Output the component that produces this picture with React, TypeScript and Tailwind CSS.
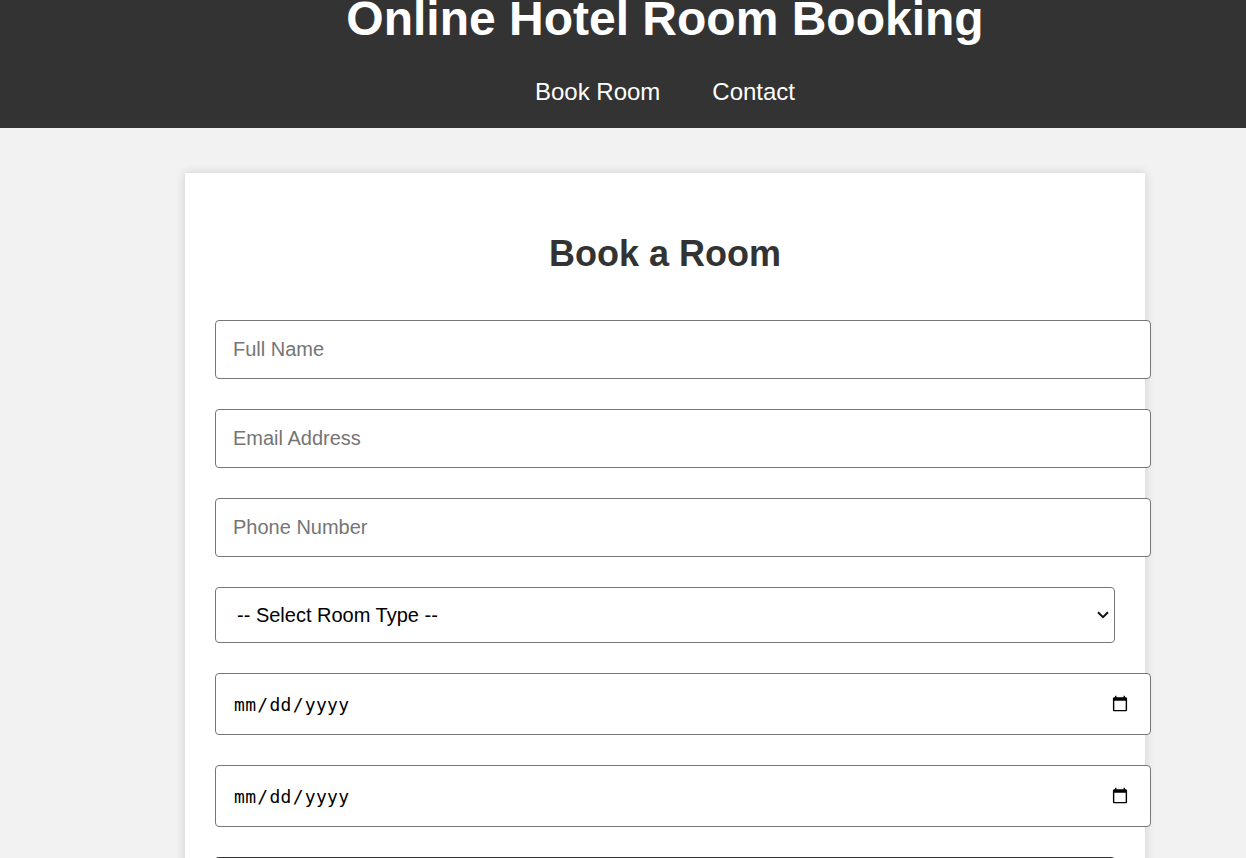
import React from "react";

export default function App() {
  return (
    <div className="min-h-screen bg-[#f2f2f2] font-['Liberation_Sans',Arial,sans-serif] overflow-hidden">
      <header className="flex flex-col bg-[#333333] text-white h-[128px]">
        <div className="ml-[84px] text-center">
          <h1 className="text-[48px] font-bold leading-[55px] -mt-[9px]">Online Hotel Room Booking</h1>
          <nav className="mt-[32px] flex justify-center gap-[52px] text-[24px] leading-[28px]">
            <a href="#" className="text-white">Book Room</a>
            <a href="#" className="text-white">Contact</a>
          </nav>
        </div>
      </header>
      <main className="pl-[84px]">
        <div className="mx-auto mt-[45px] w-[960px] bg-white px-[30px] pt-[30px] pb-[30px] shadow-[0_0_10px_rgba(0,0,0,0.15)]">
          <h2 className="mt-[30px] mb-[46px] text-center text-[36px] leading-[41px] font-bold text-[#333333]">Book a Room</h2>
          <form className="flex flex-col items-start">
            <input type="text" placeholder="Full Name" className="block w-[936px] h-[59px] mb-[30px] border border-[#767676] rounded-[4px] px-[17px] text-[20px] text-black placeholder:text-[#757575] bg-white" />
            <input type="email" placeholder="Email Address" className="block w-[936px] h-[59px] mb-[30px] border border-[#767676] rounded-[4px] px-[17px] text-[20px] text-black placeholder:text-[#757575] bg-white" />
            <input type="tel" placeholder="Phone Number" className="block w-[936px] h-[59px] mb-[30px] border border-[#767676] rounded-[4px] px-[17px] text-[20px] text-black placeholder:text-[#757575] bg-white" />
            <div className="relative mb-[30px] w-[900px] h-[56px]">
              <select defaultValue="" className="block w-[900px] h-[56px] appearance-none border border-[#767676] rounded-[4px] pl-[21px] pr-[40px] text-[20px] text-black bg-white">
                <option value="">-- Select Room Type --</option>
                <option value="single">Single Room</option>
                <option value="double">Double Room</option>
                <option value="suite">Suite</option>
              </select>
              <svg className="pointer-events-none absolute right-[6px] top-[24px]" width="12" height="8" viewBox="0 0 12 8" fill="none">
                <path d="M1 1.2 L6 6.2 L11 1.2" stroke="#111111" strokeWidth="2" />
              </svg>
            </div>
            <input type="date" className="block w-[936px] h-[62px] mb-[30px] border border-[#767676] rounded-[4px] pl-[17px] pr-[19px] text-[18px] tracking-[0.3px] text-black bg-white font-['DejaVu_Sans_Mono',monospace]" />
            <input type="date" className="block w-[936px] h-[62px] mb-[30px] border border-[#767676] rounded-[4px] pl-[17px] pr-[19px] text-[18px] tracking-[0.3px] text-black bg-white font-['DejaVu_Sans_Mono',monospace]" />
            <button type="submit" className="block w-[900px] h-[56px] bg-[#333333] text-white text-[20px] rounded-[4px]">Book Now</button>
          </form>
        </div>
      </main>
    </div>
  );
}
